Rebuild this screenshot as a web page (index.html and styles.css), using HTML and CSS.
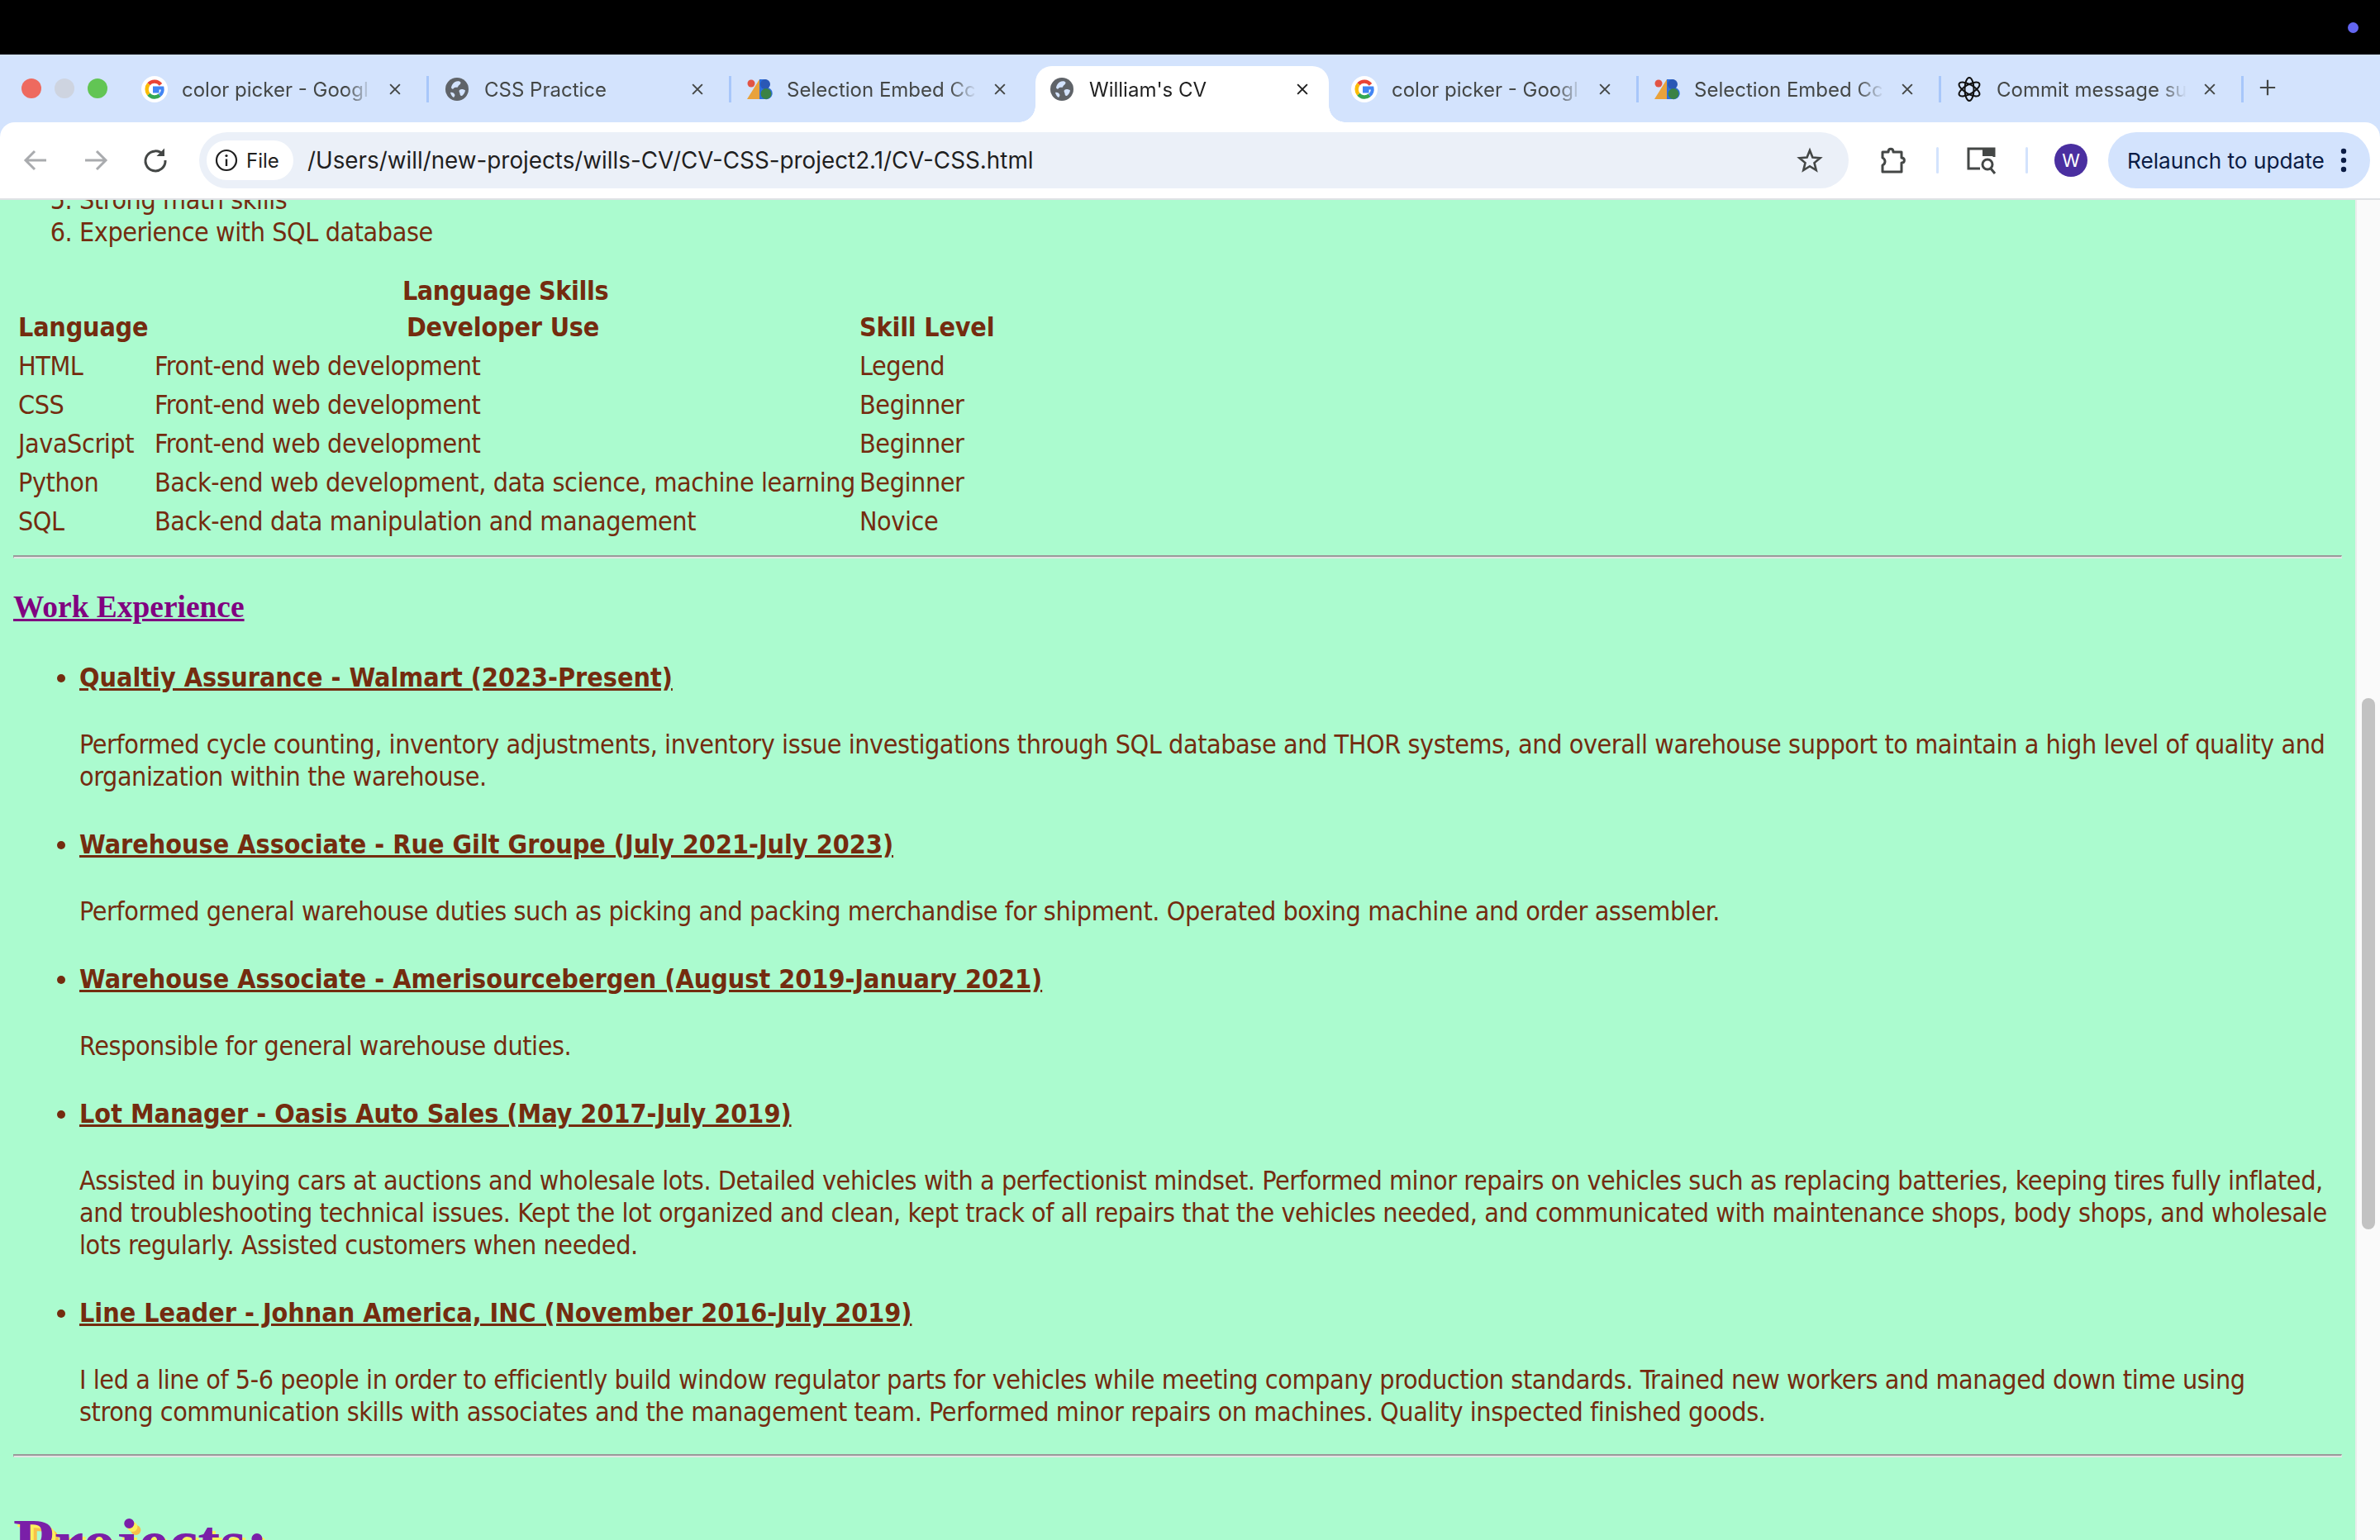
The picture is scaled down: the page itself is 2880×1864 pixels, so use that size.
FILE: index.html
```html
<!DOCTYPE html>
<html lang="en">
<head>
  <meta charset="UTF-8">
  <title>William's CV</title>
  <link rel="stylesheet" href="styles.css">
</head>
<body>
  <svg class="sprites" width="0" height="0">
    <symbol id="ico-google" viewBox="0 0 32 32">
      <circle cx="16" cy="16" r="16" fill="#fff"/>
      <path d="M23.5 10.4A9.5 9.5 0 0 0 8.9 9.8" fill="none" stroke="#ea4335" stroke-width="4.4"/>
      <path d="M8.9 9.8a9.5 9.5 0 0 0 0 12.4" fill="none" stroke="#fbbc05" stroke-width="4.4"/>
      <path d="M8.9 22.2a9.5 9.5 0 0 0 13.3 1.1" fill="none" stroke="#34a853" stroke-width="4.4"/>
      <path d="M22.2 23.3a9 9 0 0 0 3.3-8.9H16v4h5.6" fill="none" stroke="#4285f4" stroke-width="4"/>
    </symbol>
    <symbol id="ico-globe" viewBox="-2 -2 32 32">
      <circle cx="14" cy="14" r="14" fill="#5f6368"/>
      <path d="M11 5.5c3-2 7-1.6 7.500.5 0 2.500-3 3-3.500 5.500-2 .5-4-.5-5 1.500-1 1.500-2.500.5-3-1 .5-3 2-5 4-6.500zM17 15c2-1.500 5-1 7 .5-.5 3-2 5-4 6.500-2 .5-2.500-1.500-2.500-3-.5-1.500-1.500-2.500-.5-4zM6 18c2-.5 4 .5 5 2 1 1 0 3-1 4-2-1-3.500-3.500-4-6z" fill="#d3e3fd"/>
    </symbol>
    <symbol id="ico-embed" viewBox="-1 -4 32 32">
      <circle cx="5" cy="5" r="4.500" fill="#e25444"/>
      <path d="M0 24 L15 0 V24Z" fill="#e9a23b"/>
      <path d="M15 0H22A6 6 0 0 1 25 10 6 6 0 0 1 22 24H15Z" fill="#2d6fdc"/>
      <path d="M22 0h0A6 6 0 0 1 22 12 6 6 0 0 1 22 0Z" fill="#2a58b5"/>
      <circle cx="23" cy="17.500" r="6.500" fill="#3b8246"/>
    </symbol>
    <symbol id="ico-knot" viewBox="0 0 32 32">
      <g fill="none" stroke="#111" stroke-width="2">
        <ellipse cx="16" cy="16" rx="5.500" ry="14"/>
        <ellipse cx="16" cy="16" rx="5.500" ry="14" transform="rotate(60 16 16)"/>
        <ellipse cx="16" cy="16" rx="5.500" ry="14" transform="rotate(120 16 16)"/>
      </g>
    </symbol>
    <symbol id="ico-close" viewBox="0 0 20 20">
      <path d="M3.500 3.500L16.500 16.500M16.500 3.500L3.500 16.500" fill="none" stroke="currentColor" stroke-width="2.200"/>
    </symbol>
  </svg>

  <div class="os-bar"><span class="os-dot"></span></div>

  <div class="tab-strip">
    <div class="traffic">
      <span class="light red"></span>
      <span class="light grey"></span>
      <span class="light green"></span>
    </div>
    <div class="tab">
      <svg class="favicon"><use href="#ico-google"/></svg>
      <span class="tab-title">color picker - Googl</span>
      <svg class="tab-close"><use href="#ico-close"/></svg>
      <span class="tab-sep"></span>
    </div>
    <div class="tab">
      <svg class="favicon"><use href="#ico-globe"/></svg>
      <span class="tab-title">CSS Practice</span>
      <svg class="tab-close"><use href="#ico-close"/></svg>
      <span class="tab-sep"></span>
    </div>
    <div class="tab">
      <svg class="favicon"><use href="#ico-embed"/></svg>
      <span class="tab-title">Selection Embed Cc</span>
      <svg class="tab-close"><use href="#ico-close"/></svg>
    </div>
    <div class="tab active">
      <svg class="favicon"><use href="#ico-globe"/></svg>
      <span class="tab-title">William's CV</span>
      <svg class="tab-close"><use href="#ico-close"/></svg>
    </div>
    <div class="tab">
      <svg class="favicon"><use href="#ico-google"/></svg>
      <span class="tab-title">color picker - Googl</span>
      <svg class="tab-close"><use href="#ico-close"/></svg>
      <span class="tab-sep"></span>
    </div>
    <div class="tab">
      <svg class="favicon"><use href="#ico-embed"/></svg>
      <span class="tab-title">Selection Embed Cc</span>
      <svg class="tab-close"><use href="#ico-close"/></svg>
      <span class="tab-sep"></span>
    </div>
    <div class="tab">
      <svg class="favicon"><use href="#ico-knot"/></svg>
      <span class="tab-title">Commit message su</span>
      <svg class="tab-close"><use href="#ico-close"/></svg>
      <span class="tab-sep"></span>
    </div>
    <svg class="new-tab" viewBox="0 0 24 24"><path d="M12 2V22M2 12H22" fill="none" stroke="#444746" stroke-width="2.400"/></svg>
  </div>

  <div class="toolbar">
    <svg class="nav-btn" viewBox="0 0 40 40"><path d="M33 20H9M19 9L8 20L19 31" fill="none" stroke="#a9abae" stroke-width="3"/></svg>
    <svg class="nav-btn forward" viewBox="0 0 40 40"><path d="M7 20H31M21 9L32 20L21 31" fill="none" stroke="#a9abae" stroke-width="3"/></svg>
    <svg class="nav-btn reload" viewBox="0 0 40 40"><path d="M29.500 13.500A12 12 0 1 0 32 20" fill="none" stroke="#444746" stroke-width="3"/><path d="M31 5.500V15H21.500Z" fill="#444746"/></svg>
    <div class="omnibox">
      <div class="file-chip">
        <svg class="info-icon" viewBox="0 0 28 28"><circle cx="14" cy="14" r="12" fill="none" stroke="#1f1f1f" stroke-width="2.200"/><path d="M14 12.500V21" stroke="#1f1f1f" stroke-width="2.400"/><circle cx="14" cy="8.500" r="1.600" fill="#1f1f1f"/></svg>
        <span class="chip-label">File</span>
      </div>
      <span class="url">/Users/will/new-projects/wills-CV/CV-CSS-project2.1/CV-CSS.html</span>
      <svg class="star" viewBox="0 0 32 32"><path d="M16 4L19.400 12.500L28.500 13.200L21.500 19.100L23.700 28L16 23.200L8.300 28L10.500 19.100L3.500 13.200L12.600 12.500Z" fill="none" stroke="#444746" stroke-width="2.600"/></svg>
    </div>
    <svg class="ext-icon" viewBox="0 0 36 36"><path d="M6 8H13C13 3 19 3 19 8H29V15C33.500 15 33.500 21 29 21V32H6V24C10 22 10 17 6 15Z" fill="none" stroke="#444746" stroke-width="3" stroke-linejoin="round"/></svg>
    <span class="tool-sep"></span>
    <svg class="search-icon" viewBox="0 0 40 40"><path d="M18 30H4V6H35V16" fill="none" stroke="#444746" stroke-width="3"/><path d="M21 5H36V15H21Z" fill="#444746"/><circle cx="27" cy="25" r="6" fill="none" stroke="#444746" stroke-width="3"/><path d="M31 30L36 36" stroke="#444746" stroke-width="3"/></svg>
    <span class="tool-sep search-sep"></span>
    <div class="avatar">W</div>
    <div class="relaunch">
      <span class="relaunch-label">Relaunch to update</span>
      <svg class="kebab" viewBox="0 0 8 32"><circle cx="4" cy="5" r="3.200"/><circle cx="4" cy="16" r="3.200"/><circle cx="4" cy="27" r="3.200"/></svg>
    </div>
  </div>

  <div class="viewport">
    <main class="cv">
      <ol start="5" class="skills-list">
        <li>Strong math skills</li>
        <li>Experience with SQL database</li>
      </ol>

      <table class="lang-table">
        <caption>Language Skills</caption>
        <colgroup>
          <col class="col-lang">
          <col class="col-use">
          <col class="col-level">
        </colgroup>
        <tr><th class="th-left">Language</th><th>Developer Use</th><th class="th-left">Skill Level</th></tr>
        <tr><td>HTML</td><td>Front-end web development</td><td>Legend</td></tr>
        <tr><td>CSS</td><td>Front-end web development</td><td>Beginner</td></tr>
        <tr><td>JavaScript</td><td>Front-end web development</td><td>Beginner</td></tr>
        <tr><td>Python</td><td>Back-end web development, data science, machine learning</td><td>Beginner</td></tr>
        <tr><td>SQL</td><td>Back-end data manipulation and management</td><td>Novice</td></tr>
      </table>
      <hr class="rule rule-first">

      <h2 class="section-title">Work Experience</h2>
      <ul class="jobs">
        <li>
          <h3>Qualtiy Assurance - Walmart (2023-Present)</h3>
          <p>Performed cycle counting, inventory adjustments, inventory issue investigations through SQL database and THOR systems, and overall warehouse support to maintain a high level of quality and organization within the warehouse.</p>
        </li>
        <li>
          <h3>Warehouse Associate - Rue Gilt Groupe (July 2021-July 2023)</h3>
          <p>Performed general warehouse duties such as picking and packing merchandise for shipment. Operated boxing machine and order assembler.</p>
        </li>
        <li>
          <h3>Warehouse Associate - Amerisourcebergen (August 2019-January 2021)</h3>
          <p>Responsible for general warehouse duties.</p>
        </li>
        <li>
          <h3>Lot Manager - Oasis Auto Sales (May 2017-July 2019)</h3>
          <p>Assisted in buying cars at auctions and wholesale lots. Detailed vehicles with a perfectionist mindset. Performed minor repairs on vehicles such as replacing batteries, keeping tires fully inflated, and troubleshooting technical issues. Kept the lot organized and clean, kept track of all repairs that the vehicles needed, and communicated with maintenance shops, body shops, and wholesale lots regularly. Assisted customers when needed.</p>
        </li>
        <li>
          <h3>Line Leader - Johnan America, INC (November 2016-July 2019)</h3>
          <p>I led a line of 5-6 people in order to efficiently build window regulator parts for vehicles while meeting company production standards. Trained new workers and managed down time using<br>strong communication skills with associates and the management team. Performed minor repairs on machines. Quality inspected finished goods.</p>
        </li>
      </ul>
      <hr class="rule">

      <h1 class="projects">Projects:</h1>
    </main>
    <div class="scrollbar"><div class="thumb"></div></div>
  </div>
</body>
</html>
```

FILE: styles.css
```css
html, body {
  margin: 0;
  height: 100%;
}

body {
  display: flex;
  flex-direction: column;
  overflow: hidden;
  background-color: #d3e3fd;
  font-family: "Inter", "Liberation Sans", sans-serif;
}

.sprites {
  display: none;
}

/* top of the screen */
.os-bar {
  height: 66px;
  flex: none;
  background-color: #000;
  display: flex;
  justify-content: flex-end;
  align-items: center;
}

.os-dot {
  width: 13px;
  height: 13px;
  margin-right: 26px;
  border-radius: 50%;
  background-color: #6366f1;
}

/* tabs */
.tab-strip {
  height: 82px;
  flex: none;
  display: flex;
  align-items: flex-start;
  padding-top: 14px;
  box-sizing: border-box;
}

.traffic {
  width: 155px;
  height: 54px;
  flex: none;
  box-sizing: border-box;
  padding-left: 26px;
  display: flex;
  align-items: center;
  gap: 16px;
}

.light {
  width: 24px;
  height: 24px;
  border-radius: 50%;
}
.light.red { background-color: #ee6a5f; }
.light.grey { background-color: #ced4e0; }
.light.green { background-color: #62c554; }

.tab {
  position: relative;
  width: 366px;
  height: 68px;
  flex: none;
  box-sizing: border-box;
  padding: 0 0 12px 16px;
  display: flex;
  align-items: center;
  color: #444746;
}

.tab.active {
  width: 355px;
  margin-right: 11px;
  background-color: #fff;
  border-radius: 20px 20px 0 0;
  color: #1f1f1f;
}

.tab.active::before,
.tab.active::after {
  content: "";
  position: absolute;
  bottom: 0;
  width: 20px;
  height: 20px;
}

.tab.active::before {
  left: -20px;
  background: radial-gradient(circle at 0 0, transparent 19.5px, #fff 20px);
}

.tab.active::after {
  right: -20px;
  background: radial-gradient(circle at 100% 0, transparent 19.5px, #fff 20px);
}

.favicon {
  width: 32px;
  height: 32px;
  flex: none;
}

.tab-title {
  width: 232px;
  margin-left: 17px;
  flex: none;
  white-space: nowrap;
  font-size: 24px;
  -webkit-mask-image: linear-gradient(to right, #000 198px, transparent 230px);
  mask-image: linear-gradient(to right, #000 198px, transparent 230px);
}

.tab-close {
  width: 18px;
  height: 18px;
  margin-left: 17px;
  flex: none;
}

.tab-sep {
  width: 3px;
  height: 32px;
  margin-left: 29px;
  flex: none;
  background-color: #a8c7fa;
}

.new-tab {
  width: 22px;
  height: 22px;
  margin: 15px 0 0 16px;
  flex: none;
}

/* address bar row */
.toolbar {
  height: 92px;
  flex: none;
  box-sizing: border-box;
  padding-left: 23px;
  display: flex;
  align-items: center;
  background-color: #fff;
  border-radius: 18px 18px 0 0;
}

.nav-btn {
  width: 40px;
  height: 40px;
  flex: none;
}
.nav-btn.forward { margin-left: 33px; }
.nav-btn.reload { margin-left: 32px; }

.omnibox {
  width: 1996px;
  height: 68px;
  margin-left: 33px;
  flex: none;
  box-sizing: border-box;
  padding: 0 31px 0 9px;
  display: flex;
  align-items: center;
  border-radius: 34px;
  background-color: #ebf0f8;
}

.file-chip {
  width: 105px;
  height: 48px;
  flex: none;
  box-sizing: border-box;
  padding-left: 10px;
  display: flex;
  align-items: center;
  gap: 10px;
  border-radius: 24px;
  background-color: #fff;
}

.info-icon {
  width: 28px;
  height: 28px;
}

.chip-label {
  font-size: 24px;
  color: #1f1f1f;
}

.url {
  margin-left: 17px;
  font-size: 27.8px;
  color: #1f1f1f;
  white-space: nowrap;
}

.star {
  width: 32px;
  height: 32px;
  margin-left: auto;
  flex: none;
}

.ext-icon {
  width: 36px;
  height: 36px;
  margin-left: 35px;
  flex: none;
}

.tool-sep {
  width: 3px;
  height: 32px;
  margin-left: 35px;
  flex: none;
  border-radius: 2px;
  background-color: #d3e3fd;
}

.search-icon {
  width: 40px;
  height: 40px;
  margin-left: 32px;
  flex: none;
}

.tool-sep.search-sep { margin-left: 33px; }

.avatar {
  width: 40px;
  height: 40px;
  margin-left: 32px;
  flex: none;
  display: flex;
  align-items: center;
  justify-content: center;
  border-radius: 50%;
  background-color: #4a2fa0;
  color: #fff;
  font-size: 22px;
}

.relaunch {
  width: 317px;
  height: 68px;
  margin-left: 25px;
  flex: none;
  box-sizing: border-box;
  padding-left: 23px;
  display: flex;
  align-items: center;
  border-radius: 34px;
  background-color: #d3e3fd;
  color: #0b1c44;
}

.relaunch-label {
  width: 237px;
  flex: none;
  font-size: 26.2px;
  white-space: nowrap;
}

.kebab {
  width: 8px;
  height: 32px;
  margin-left: 21px;
  fill: #0b1c44;
}

/* page area */
.viewport {
  flex: 1;
  min-height: 0;
  display: flex;
  border-top: 2px solid #dfe1e5;
  background-color: #abfbcf;
}

.cv {
  flex: 1;
  min-width: 0;
  padding: 0 16px;
  overflow: hidden;
  font-family: "DejaVu Sans", "Liberation Sans", sans-serif;
  font-stretch: condensed;
  font-size: 32px;
  line-height: 38.6px;
  letter-spacing: -0.42px;
  color: #742c0f;
}

.skills-list {
  margin: -19px 0 33px;
  padding-left: 80px;
}

.lang-table {
  width: 1191px;
  table-layout: fixed;
  border-spacing: 2px;
}

.lang-table caption {
  font-weight: bold;
}

.col-lang { width: 163px; }
.col-use { width: 851px; }
.col-level { width: 169px; }

.lang-table th,
.lang-table td {
  padding: 3.2px 4px;
  text-align: left;
  white-space: nowrap;
}

.lang-table th {
  letter-spacing: -0.2px;
  text-align: center;
}

.lang-table .th-left {
  text-align: left;
}

.rule {
  margin: 0;
  height: 0;
  border-style: solid;
  border-width: 2px 1px;
  border-color: #9a9a9a #e4e4e4 #e4e4e4 #9a9a9a;
}

.rule-first {
  margin-top: 16px;
}

.section-title {
  margin: 36px 0 40px;
  font-family: "Liberation Serif", serif;
  font-stretch: normal;
  font-size: 37.44px;
  line-height: 46px;
  letter-spacing: 0;
  color: #800080;
  text-decoration: underline;
}

.jobs {
  margin: 0;
  padding-left: 80px;
}

.jobs h3 {
  margin: 0;
  font-size: 32px;
  line-height: 44px;
  letter-spacing: 0;
  text-decoration: underline;
}

.jobs p {
  margin: 40px 0;
  line-height: 39px;
}

.jobs li:last-child p {
  margin-bottom: 31px;
}

.projects {
  margin: 57px 0 0;
  font-family: "Liberation Serif", serif;
  font-stretch: normal;
  font-size: 81px;
  line-height: 92px;
  letter-spacing: 0;
  color: #7a1fa8;
  text-shadow: 4px 4px 0 #fdf05c, 8px 8px 0 #f7c04a;
}

.scrollbar {
  width: 28px;
  flex: none;
  border-left: 2px solid #ececec;
  background-color: #fafafa;
}

.thumb {
  width: 16px;
  height: 643px;
  margin: 603px 0 0 6px;
  border-radius: 8px;
  background-color: #c2c2c2;
}
```
